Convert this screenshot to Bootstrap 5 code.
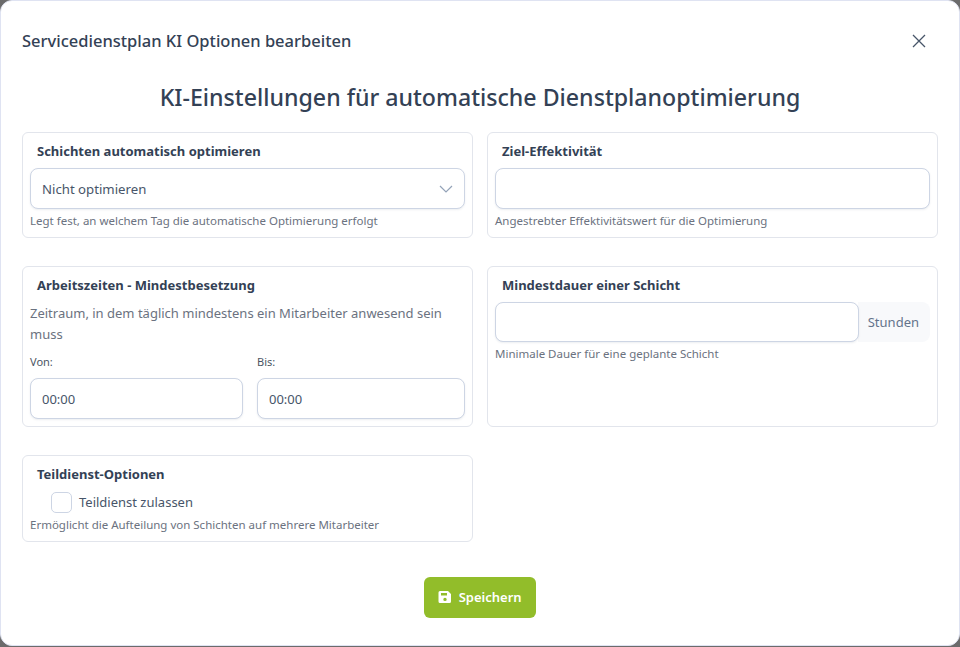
<!DOCTYPE html>
<html lang="de">
<head>
<meta charset="UTF-8">
<meta name="viewport" content="width=device-width, initial-scale=1.0">
<title>Servicedienstplan KI Optionen bearbeiten</title>
<link rel="stylesheet" href="https://cdn.jsdelivr.net/npm/bootstrap@5.3.2/dist/css/bootstrap.min.css">
<style>
    html, body { height: 100%; }
    body {
        background-color: #6b6b6b;
        color: #334155;
        font-family: "Noto Sans", "Open Sans", sans-serif;
        font-size: 14px;
        margin: 0;
        overflow: hidden;
    }
    .dlg {
        height: 646px;
        background: #fff;
        border: 1px solid #dfe3f2;
        border-radius: 12px;
        padding: 0 21px;
    }
    .dlg-head { height: 81px; padding-bottom: 1px; }
    .dlg-title { font-size: 16.5px; font-weight: 500; color: #334155; margin: 0; }
    .dlg-close { background: none; border: 0; padding: 0; width: 20px; height: 20px; margin: 0 9px 0 0; line-height: 0; }
    .main-title { font-size: 23.15px; font-weight: 500; line-height: 30px; color: #334155; margin: 0 0 20px; text-align: center; }
    .opt-grid { display: grid; grid-template-columns: 451px 451px; column-gap: 14px; row-gap: 28px; }
    .opt-box { border: 1px solid #e2e5ec; border-radius: 6px; padding: 7px; background: #fff; }
    .opt-label { font-size: 13px; font-weight: 700; line-height: 22px; color: #334155; margin: 0 0 6px; padding-left: 7px; }
    .opt-input {
        height: 41px;
        border: 1px solid #cdd5e4;
        border-radius: 8px;
        font-size: 13px;
        color: #475569;
        padding: 0 11px;
        box-shadow: 0 1px 2px rgba(100, 116, 139, .12);
    }
    .opt-input:focus { box-shadow: none; border-color: #cdd5e4; }
    .form-select.opt-input {
        font-size: 13.2px;
        padding-top: 2px;
        background-image: url("data:image/svg+xml,%3csvg xmlns='http://www.w3.org/2000/svg' viewBox='0 0 14 10'%3e%3cpath fill='none' stroke='%2394a3b8' stroke-width='1.2' d='M1 2l6 6 6-6'/%3e%3c/svg%3e");
        background-size: 14px 10px;
        background-position: right 11px center;
    }
    .opt-help { font-size: 11.5px; line-height: 15px; color: #6b7280; margin: 4px 0 2px; }
    .opt-desc { font-size: 13px; line-height: 21px; color: #6b7280; margin: 7px 0 9px; }
    .time-label { font-size: 11px; line-height: 15px; color: #4b5563; margin-bottom: 9px; }
    .time-von { width: 213px; }
    .time-bis { width: 208px; }
    .unit-wrap .opt-input { border-radius: 8px !important; height: 40px; }
    .unit-text {
        background: #f8f9fb;
        border: 0;
        border-radius: 0 8px 8px 0;
        font-size: 13px;
        color: #64748b;
        padding: 2px 11px 0 10px;
        height: 40px;
    }
    .check-row { padding-left: 21px; height: 22px; gap: 7px; font-size: 13px; color: #475569; margin-top: 1px; }
    .check-row span { margin-top: 2px; }
    .check-row .form-check-input { width: 21px; height: 21px; margin: 0; border-color: #cdd5e4; border-radius: 5px; }
    .save-wrap { margin-top: 35px; }
    .btn-save {
        background: #92bd2a;
        color: #fff;
        border: 0;
        border-radius: 6px;
        width: 112px;
        height: 41px;
        font-size: 13px;
        font-weight: 600;
        padding: 0;
    }
    .btn-save:hover { background: #92bd2a; color: #fff; }
    .save-icon { vertical-align: -2px; margin-right: 3px; }
</style>
</head>
<body>
<div class="dlg">
    <div class="dlg-head d-flex align-items-center justify-content-between">
        <h5 class="dlg-title">Servicedienstplan KI Optionen bearbeiten</h5>
        <button type="button" class="dlg-close" aria-label="Schließen">
            <svg width="20" height="20" viewBox="0 0 20 20"><path d="M4 4l12 12M16 4L4 16" stroke="#475569" stroke-width="1.3" fill="none"/></svg>
        </button>
    </div>
    <h2 class="main-title">KI-Einstellungen für automatische Dienstplanoptimierung</h2>

    <div class="opt-grid">
        <div class="opt-box">
            <div class="opt-label">Schichten automatisch optimieren</div>
            <select class="form-select opt-input">
                <option>Nicht optimieren</option>
            </select>
            <div class="opt-help">Legt fest, an welchem Tag die automatische Optimierung erfolgt</div>
        </div>
        <div class="opt-box">
            <div class="opt-label">Ziel-Effektivität</div>
            <input type="text" class="form-control opt-input">
            <div class="opt-help">Angestrebter Effektivitätswert für die Optimierung</div>
        </div>

        <div class="opt-box">
            <div class="opt-label">Arbeitszeiten - Mindestbesetzung</div>
            <p class="opt-desc">Zeitraum, in dem täglich mindestens ein Mitarbeiter anwesend sein muss</p>
            <div class="d-flex justify-content-between">
                <div class="time-von">
                    <div class="time-label">Von:</div>
                    <input type="text" class="form-control opt-input" value="00:00">
                </div>
                <div class="time-bis">
                    <div class="time-label">Bis:</div>
                    <input type="text" class="form-control opt-input" value="00:00">
                </div>
            </div>
        </div>
        <div class="opt-box">
            <div class="opt-label">Mindestdauer einer Schicht</div>
            <div class="input-group unit-wrap">
                <input type="text" class="form-control opt-input">
                <span class="input-group-text unit-text">Stunden</span>
            </div>
            <div class="opt-help">Minimale Dauer für eine geplante Schicht</div>
        </div>

        <div class="opt-box">
            <div class="opt-label">Teildienst-Optionen</div>
            <label class="check-row d-flex align-items-center">
                <input type="checkbox" class="form-check-input">
                <span>Teildienst zulassen</span>
            </label>
            <div class="opt-help">Ermöglicht die Aufteilung von Schichten auf mehrere Mitarbeiter</div>
        </div>
    </div>

    <div class="save-wrap text-center">
        <button type="button" class="btn btn-save">
            <svg width="14" height="14" viewBox="0 0 14 14" class="save-icon"><path fill="#fff" fill-rule="evenodd" d="M2 1h8l3 3v7.500a1.500 1.500 0 0 1-1.500 1.500h-9.500a1.500 1.500 0 0 1-1.500-1.500v-9a1.500 1.500 0 0 1 1.500-1.500zM3 3v2.500h6V3zM7 7.700a1.700 1.700 0 1 0 0 3.400 1.700 1.700 0 0 0 0-3.400z"/></svg>
            Speichern
        </button>
    </div>
</div>
<script src="https://cdn.jsdelivr.net/npm/bootstrap@5.3.2/dist/js/bootstrap.bundle.min.js"></script>
</body>
</html>
